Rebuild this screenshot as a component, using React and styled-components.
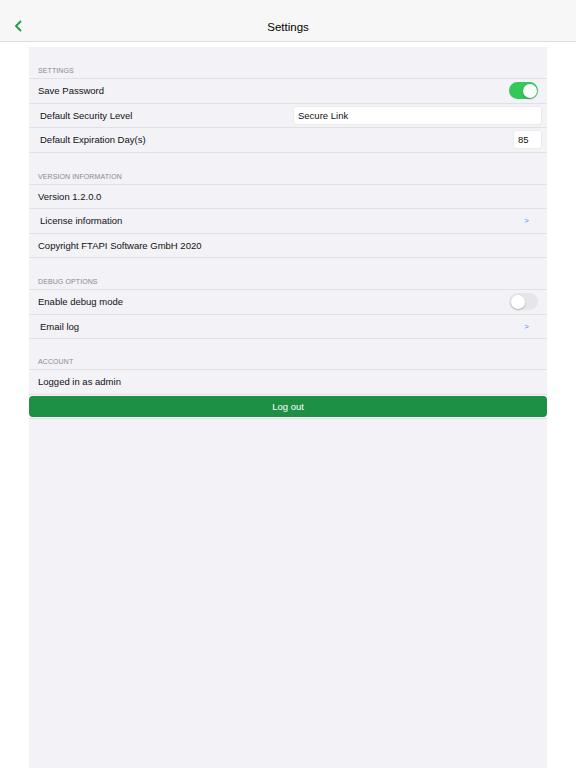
import styled, { createGlobalStyle } from 'styled-components';

const GlobalStyle = createGlobalStyle`
  body {
    margin: 0;
    background: #ffffff;
    font-family: "Liberation Sans", Arial, sans-serif;
    color: #000000;
  }
`;

const NavBar = styled.div`
  height: 29px;
  padding-top: 12px;
  background: #f7f7f7;
  border-bottom: 1px solid #dedede;
  display: flex;
  align-items: center;
  justify-content: center;
  position: relative;
`;

const BackButton = styled.div`
  position: absolute;
  left: 14px;
  top: 20px;
  width: 10px;
  height: 12px;
  display: flex;
`;

const Title = styled.div`
  font-size: 11.5px;
`;

const Panel = styled.div`
  margin: 5px 29px 0;
  min-height: 721px;
  background: #f2f2f7;
`;

const SectionHeader = styled.div`
  height: ${(p) => (p.$short ? 31 : 32)}px;
  display: flex;
  align-items: flex-end;
  padding: 0 9px 4px;
  box-sizing: border-box;
  border-bottom: 1px solid #e0e0e5;
  font-size: 7px;
  color: #8a8a8e;
  text-transform: uppercase;
  letter-spacing: 0.1px;
`;

const Row = styled.div`
  height: 23.5px;
  display: flex;
  align-items: center;
  justify-content: space-between;
  padding: 0 5px 0 ${(p) => (p.$indent ? 11 : 9)}px;
  border-bottom: 1px solid #e0e0e5;
  font-size: 9.5px;
  color: #111111;
`;

const TextInput = styled.div`
  width: ${(p) => p.$width}px;
  height: 19px;
  box-sizing: border-box;
  background: #ffffff;
  border: 1px solid #ececef;
  border-radius: 3px;
  padding: 0 4px;
  display: flex;
  align-items: center;
  font-size: 9.5px;
`;

const Toggle = styled.div`
  width: 29px;
  height: 17px;
  margin-right: 4px;
  border-radius: 9px;
  background: ${(p) => (p.$on ? '#34c759' : '#e6e6ea')};
  display: flex;
  align-items: center;
  justify-content: ${(p) => (p.$on ? 'flex-end' : 'flex-start')};
  padding: 0 1.5px;
  box-sizing: border-box;
`;

const Knob = styled.div`
  width: 14px;
  height: 14px;
  border-radius: 50%;
  background: #ffffff;
  box-shadow: 0 1px 2px rgba(0, 0, 0, 0.25);
`;

const Chevron = styled.span`
  color: #3b8cf5;
  font-size: 8px;
  margin-right: 13px;
`;

const ButtonRow = styled.div`
  padding: 1.5px 0 1px;
  border-bottom: 1px solid #e0e0e5;
`;

const LogoutButton = styled.button`
  width: 100%;
  height: 21px;
  border: none;
  border-radius: 4px;
  background: #1e9046;
  color: #ffffff;
  font-family: inherit;
  font-size: 9.5px;
  display: block;
`;

export default function App() {
  return (
    <>
      <GlobalStyle />
      <NavBar>
        <BackButton>
          <svg width="10" height="12" viewBox="0 0 10 12">
            <polyline points="7,1 2,6 7,11" fill="none" stroke="#1a9a4a" strokeWidth="1.8" />
          </svg>
        </BackButton>
        <Title>Settings</Title>
      </NavBar>
      <Panel>
        <SectionHeader>Settings</SectionHeader>
        <Row>
          Save Password
          <Toggle $on>
            <Knob />
          </Toggle>
        </Row>
        <Row $indent>
          Default Security Level
          <TextInput $width={249}>Secure Link</TextInput>
        </Row>
        <Row $indent>
          Default Expiration Day(s)
          <TextInput $width={29}>85</TextInput>
        </Row>

        <SectionHeader>Version Information</SectionHeader>
        <Row>Version 1.2.0.0</Row>
        <Row $indent>
          License information
          <Chevron>&gt;</Chevron>
        </Row>
        <Row>Copyright FTAPI Software GmbH 2020</Row>

        <SectionHeader>Debug Options</SectionHeader>
        <Row>
          Enable debug mode
          <Toggle>
            <Knob />
          </Toggle>
        </Row>
        <Row $indent>
          Email log
          <Chevron>&gt;</Chevron>
        </Row>

        <SectionHeader $short>Account</SectionHeader>
        <Row>Logged in as admin</Row>
        <ButtonRow>
          <LogoutButton>Log out</LogoutButton>
        </ButtonRow>
      </Panel>
    </>
  );
}
